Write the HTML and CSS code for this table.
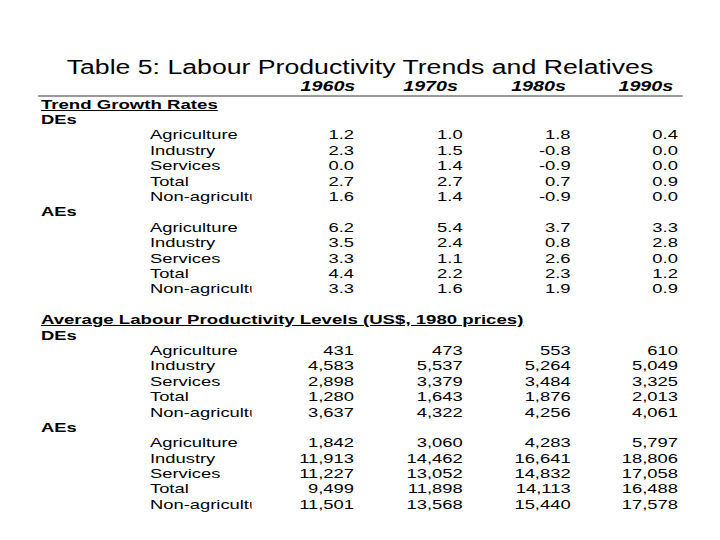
FILE: index.html
```html
<!DOCTYPE html>
<html>
<head>
<meta charset="utf-8">
<link rel="stylesheet" href="styles.css">
</head>
<body>
<div class="slide">
  <div class="title">Table 5: Labour Productivity Trends and Relatives</div>
  <div class="table">
    <div class="row head"><span class="yr first">1960s</span><span class="yr">1970s</span><span class="yr">1980s</span><span class="yr">1990s</span></div>
    <div class="row"><span class="section">Trend Growth Rates</span></div>
    <div class="row"><span class="group">DEs</span></div>
    <div class="row"><span class="label">Agriculture</span><span class="num">1.2</span><span class="num">1.0</span><span class="num">1.8</span><span class="num">0.4</span></div>
    <div class="row"><span class="label">Industry</span><span class="num">2.3</span><span class="num">1.5</span><span class="num">-0.8</span><span class="num">0.0</span></div>
    <div class="row"><span class="label">Services</span><span class="num">0.0</span><span class="num">1.4</span><span class="num">-0.9</span><span class="num">0.0</span></div>
    <div class="row"><span class="label">Total</span><span class="num">2.7</span><span class="num">2.7</span><span class="num">0.7</span><span class="num">0.9</span></div>
    <div class="row"><span class="label">Non-agriculture</span><span class="num">1.6</span><span class="num">1.4</span><span class="num">-0.9</span><span class="num">0.0</span></div>
    <div class="row"><span class="group">AEs</span></div>
    <div class="row"><span class="label">Agriculture</span><span class="num">6.2</span><span class="num">5.4</span><span class="num">3.7</span><span class="num">3.3</span></div>
    <div class="row"><span class="label">Industry</span><span class="num">3.5</span><span class="num">2.4</span><span class="num">0.8</span><span class="num">2.8</span></div>
    <div class="row"><span class="label">Services</span><span class="num">3.3</span><span class="num">1.1</span><span class="num">2.6</span><span class="num">0.0</span></div>
    <div class="row"><span class="label">Total</span><span class="num">4.4</span><span class="num">2.2</span><span class="num">2.3</span><span class="num">1.2</span></div>
    <div class="row"><span class="label">Non-agriculture</span><span class="num">3.3</span><span class="num">1.6</span><span class="num">1.9</span><span class="num">0.9</span></div>
    <div class="row"></div>
    <div class="row"><span class="section">Average Labour Productivity Levels (US$, 1980 prices)</span></div>
    <div class="row"><span class="group">DEs</span></div>
    <div class="row"><span class="label">Agriculture</span><span class="num">431</span><span class="num">473</span><span class="num">553</span><span class="num">610</span></div>
    <div class="row"><span class="label">Industry</span><span class="num">4,583</span><span class="num">5,537</span><span class="num">5,264</span><span class="num">5,049</span></div>
    <div class="row"><span class="label">Services</span><span class="num">2,898</span><span class="num">3,379</span><span class="num">3,484</span><span class="num">3,325</span></div>
    <div class="row"><span class="label">Total</span><span class="num">1,280</span><span class="num">1,643</span><span class="num">1,876</span><span class="num">2,013</span></div>
    <div class="row"><span class="label">Non-agriculture</span><span class="num">3,637</span><span class="num">4,322</span><span class="num">4,256</span><span class="num">4,061</span></div>
    <div class="row"><span class="group">AEs</span></div>
    <div class="row"><span class="label">Agriculture</span><span class="num">1,842</span><span class="num">3,060</span><span class="num">4,283</span><span class="num">5,797</span></div>
    <div class="row"><span class="label">Industry</span><span class="num">11,913</span><span class="num">14,462</span><span class="num">16,641</span><span class="num">18,806</span></div>
    <div class="row"><span class="label">Services</span><span class="num">11,227</span><span class="num">13,052</span><span class="num">14,832</span><span class="num">17,058</span></div>
    <div class="row"><span class="label">Total</span><span class="num">9,499</span><span class="num">11,898</span><span class="num">14,113</span><span class="num">16,488</span></div>
    <div class="row"><span class="label">Non-agriculture</span><span class="num">11,501</span><span class="num">13,568</span><span class="num">15,440</span><span class="num">17,578</span></div>
  </div>
</div>
</body>
</html>
```
FILE: styles.css
```css
html, body {
  margin: 0;
  background: #ffffff;
}

.slide {
  width: 529.4px;
  height: 540px;
  box-sizing: border-box;
  padding-top: 56px;
  transform: scaleX(1.36);
  transform-origin: 0 0;
  font-family: "Liberation Sans", Arial, sans-serif;
  color: #000000;
}

.title {
  font-size: 19.6px;
  line-height: 22px;
  text-align: center;
}

.table {
  margin-left: 27.9px;
  width: 473.9px;
  margin-top: 1.3px;
}

.row {
  display: grid;
  grid-template-columns: 82.4px 75px 75px 79.9px 79.4px 78.9px 3.3px;
  font-size: 13.5px;
  line-height: 15.4px;
  height: 15.4px;
}

.head {
  border-bottom: 2px solid #9a9a9a;
  font-size: 14.5px;
  font-weight: bold;
  font-style: italic;
}

.yr {
  text-align: right;
  padding-right: 3.4px;
}

.yr.first {
  grid-column: 3;
  padding-right: 0;
  margin-right: -1px;
}

.section {
  grid-column: 1 / -1;
  padding-left: 2.2px;
  font-size: 13.7px;
  font-weight: bold;
  text-decoration: underline;
  white-space: nowrap;
}

.group {
  grid-column: 1 / -1;
  padding-left: 2.2px;
  font-weight: bold;
}

.label {
  grid-column: 2;
  overflow: hidden;
  white-space: nowrap;
}

.num {
  text-align: right;
}
```
